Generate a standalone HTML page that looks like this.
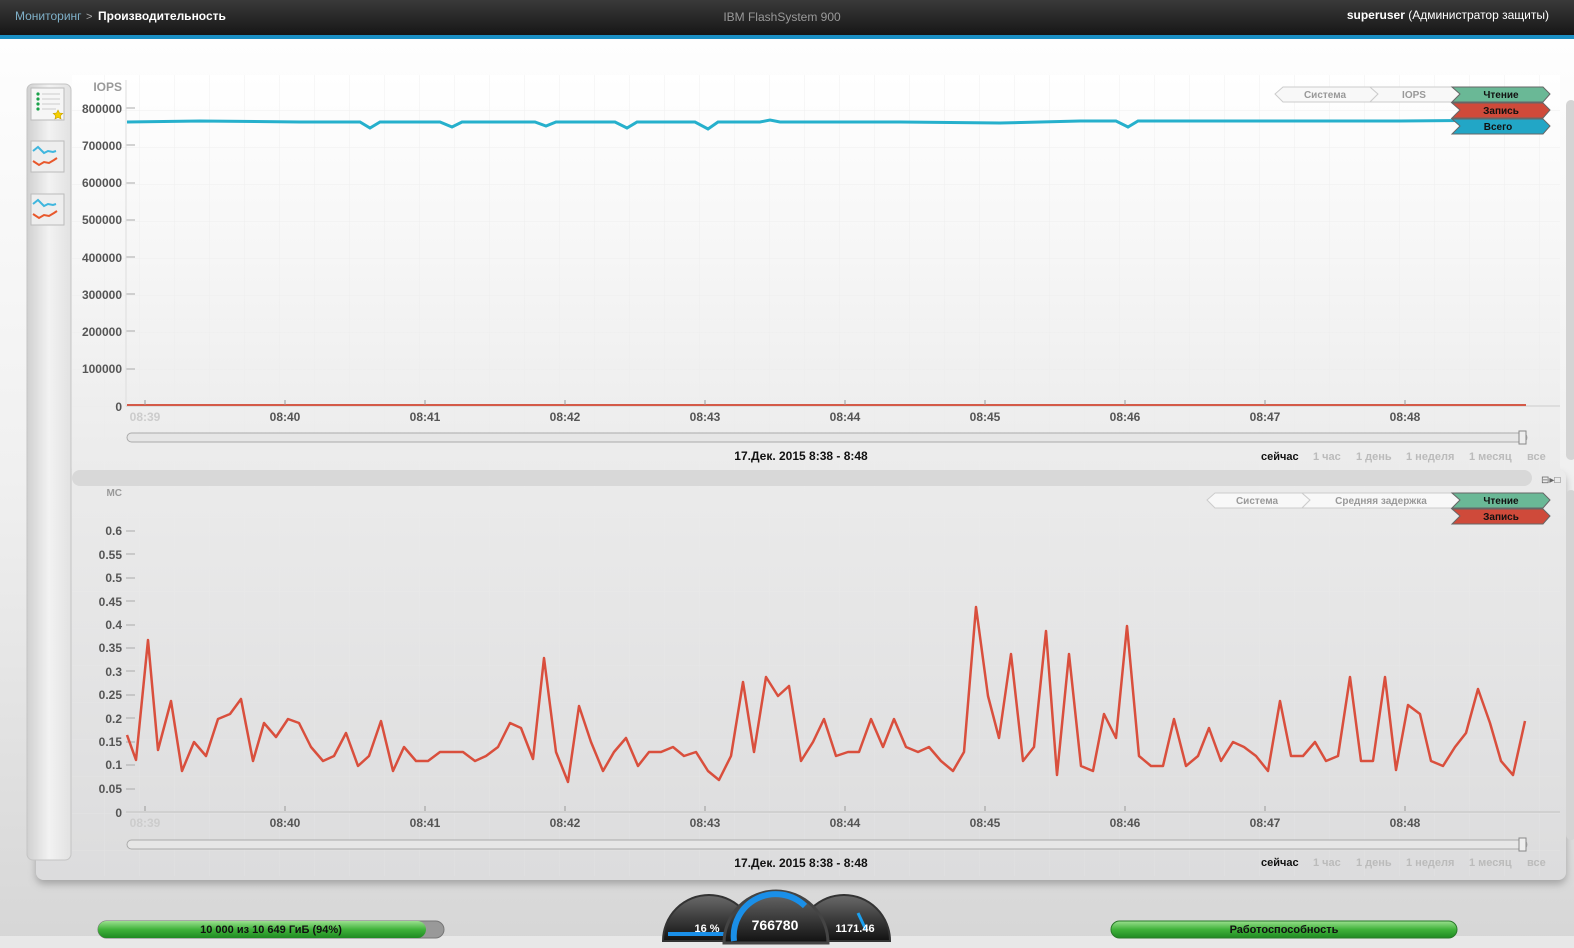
<!DOCTYPE html>
<html><head><meta charset="utf-8"><style>
body{margin:0;width:1574px;height:948px;overflow:hidden;font-family:"Liberation Sans",sans-serif;background:#e6e6e6}
svg{display:block}
text{font-family:"Liberation Sans",sans-serif}
</style></head><body>
<svg width="1574" height="948" viewBox="0 0 1574 948" xmlns="http://www.w3.org/2000/svg">
<defs>
<linearGradient id="hdr" x1="0" y1="0" x2="0" y2="1"><stop offset="0" stop-color="#3a3a3a"/><stop offset="1" stop-color="#161616"/></linearGradient>
<linearGradient id="pg" x1="0" y1="0" x2="0" y2="1"><stop offset="0" stop-color="#ffffff"/><stop offset="0.5" stop-color="#f0f0f0"/><stop offset="1" stop-color="#d6d6d6"/></linearGradient>
<linearGradient id="top" x1="0" y1="0" x2="0" y2="1"><stop offset="0" stop-color="#ffffff"/><stop offset="1" stop-color="#ebebeb"/></linearGradient>
<linearGradient id="low" x1="0" y1="0" x2="0" y2="1"><stop offset="0" stop-color="#ebebeb"/><stop offset="1" stop-color="#dcdcdd"/></linearGradient>
<linearGradient id="side" x1="0" y1="0" x2="1" y2="0"><stop offset="0" stop-color="#d0d0d0"/><stop offset="0.5" stop-color="#f2f2f2"/><stop offset="1" stop-color="#e2e2e2"/></linearGradient>
<linearGradient id="grn" x1="0" y1="0" x2="0" y2="1"><stop offset="0" stop-color="#9be08f"/><stop offset="0.5" stop-color="#3fb23a"/><stop offset="1" stop-color="#1f8a22"/></linearGradient>
<linearGradient id="gauge" x1="0" y1="0" x2="0" y2="1"><stop offset="0" stop-color="#6a6a6a"/><stop offset="1" stop-color="#111"/></linearGradient>
<pattern id="grid" width="35" height="37" patternUnits="userSpaceOnUse"><path d="M35 0V37M0 37H35" stroke="#ececec" stroke-width="1" fill="none"/></pattern>
<filter id="sh" x="-5%" y="-5%" width="110%" height="120%"><feDropShadow dx="0" dy="4" stdDeviation="4" flood-color="#000" flood-opacity="0.25"/></filter>
</defs>
<rect width="1574" height="948" fill="url(#pg)"/>
<rect width="1574" height="35" fill="url(#hdr)"/>
<rect y="35" width="1574" height="4" fill="#1a8fc4"/>
<text x="15" y="20" font-size="12" fill="#7fb0c8">Мониторинг</text>
<text x="86" y="20" font-size="11" fill="#aaa">&gt;</text>
<text x="98" y="20" font-size="12" font-weight="bold" fill="#fff">Производительность</text>
<text x="782" y="21" font-size="12" fill="#999" text-anchor="middle">IBM FlashSystem 900</text>
<text x="1549" y="19" font-size="12" fill="#fff" text-anchor="end"><tspan font-weight="bold">superuser</tspan>  (Администратор защиты)</text>

<rect x="36" y="470" width="1530" height="410" rx="8" fill="url(#low)" filter="url(#sh)"/>
<rect x="72" y="75" width="1488" height="395" fill="url(#top)"/>
<rect x="72" y="75" width="1488" height="395" fill="url(#grid)" opacity="0.8"/>
<rect x="72" y="470" width="1460" height="16" rx="8" fill="#d8d8d8"/>
<rect x="72" y="486" width="1488" height="390" fill="url(#grid)" opacity="0.35"/>

<rect x="27" y="84" width="44" height="776" rx="6" fill="url(#side)" stroke="#c4c4c4"/>
<rect x="31" y="88" width="33" height="32" fill="#f6f6f6" stroke="#bbb"/>
<g fill="#1aa24a"><circle cx="38" cy="94" r="1.6"/><circle cx="38" cy="99" r="1.6"/><circle cx="38" cy="104" r="1.6"/><circle cx="38" cy="109" r="1.6"/></g>
<g stroke="#ccc"><path d="M42 94H60M42 99H60M42 104H60M42 109H56"/></g>
<path d="M58 110l1.5 3 3.3.4-2.4 2.2.6 3.3-3-1.6-3 1.6.6-3.3-2.4-2.2 3.3-.4z" fill="#f5d000" stroke="#c9a000" stroke-width=".6"/>
<rect x="31" y="141" width="33" height="31" fill="#eee" stroke="#bbb"/>
<path d="M33 151l5-4 6 6 4-2 5 1 3-1" stroke="#3fb6de" stroke-width="2" fill="none"/>
<path d="M33 161l6 4 5-3 5 1 5-3 3-2" stroke="#e8582c" stroke-width="2" fill="none"/>
<rect x="31" y="194" width="33" height="31" fill="#eee" stroke="#bbb"/>
<path d="M33 204l5-4 6 6 4-2 5 1 3-1" stroke="#3fb6de" stroke-width="2" fill="none"/>
<path d="M33 214l6 4 5-3 5 1 5-3 3-2" stroke="#e8582c" stroke-width="2" fill="none"/>

<text x="122" y="91" font-size="12" font-weight="bold" fill="#999" text-anchor="end">IOPS</text>
<g font-size="12" font-weight="bold" fill="#555" text-anchor="end">
<text x="122" y="113">800000</text><text x="122" y="150">700000</text><text x="122" y="187">600000</text><text x="122" y="224">500000</text><text x="122" y="262">400000</text><text x="122" y="299">300000</text><text x="122" y="336">200000</text><text x="122" y="373">100000</text><text x="122" y="411">0</text>
</g>
<g stroke="#aaa"><path d="M126 108h9M126 145h9M126 183h9M126 220h9M126 257h9M126 294h9M126 331h9M126 369h9"/></g>
<path d="M126 80V406" stroke="#ddd"/>
<path d="M126 406H1560" stroke="#ddd" stroke-width="2"/>
<path d="M127 405H1526" stroke="#d45a48" stroke-width="2"/>
<g stroke="#999"><path d="M145 400v5M285 400v5M425 400v5M565 400v5M705 400v5M845 400v5M985 400v5M1125 400v5M1265 400v5M1405 400v5"/></g>
<g font-size="12" font-weight="bold" fill="#555" text-anchor="middle">
<text x="145" y="421" fill="#ccc">08:39</text><text x="285" y="421">08:40</text><text x="425" y="421">08:41</text><text x="565" y="421">08:42</text><text x="705" y="421">08:43</text><text x="845" y="421">08:44</text><text x="985" y="421">08:45</text><text x="1125" y="421">08:46</text><text x="1265" y="421">08:47</text><text x="1405" y="421">08:48</text>
</g>
<path d="M127 122L200 121 300 122 360 122 370 128 380 122 440 122 452 127 462 122 535 122 546 126 556 122 615 122 627 128 637 122 695 122 708 129 718 122 760 122 770 120 780 122 900 122 1000 123 1080 121 1116 121 1128 127 1138 121 1300 121 1400 121 1526 120" stroke="#26b0cc" stroke-width="3" fill="none"/>
<rect x="127" y="433" width="1400" height="9" rx="4.5" fill="#e6e6e6" stroke="#aaa"/>
<rect x="1519" y="431" width="7" height="13" fill="#eee" stroke="#888"/>
<text x="801" y="460" font-size="12" font-weight="bold" fill="#111" text-anchor="middle">17.Дек. 2015 8:38 - 8:48</text>
<g font-size="11" font-weight="bold" fill="#bbb"><text x="1261" y="460" fill="#111">сейчас</text><text x="1313" y="460">1 час</text><text x="1356" y="460">1 день</text><text x="1406" y="460">1 неделя</text><text x="1469" y="460">1 месяц</text><text x="1527" y="460">все</text></g>

<path d="M1283 87H1370L1378 94 1370 102H1283L1275 94Z" fill="#f8f8f8" stroke="#ccc"/>
<text x="1325" y="98" font-size="10" font-weight="bold" fill="#999" text-anchor="middle">Система</text>
<path d="M1370 87H1452L1460 94 1452 102H1370L1378 94Z" fill="#f8f8f8" stroke="#ccc"/>
<text x="1414" y="98" font-size="10" font-weight="bold" fill="#999" text-anchor="middle">IOPS</text>
<path d="M1452 87H1543L1550 94 1543 102H1452L1460 94Z" fill="#6ab896" stroke="#666"/>
<text x="1501" y="98" font-size="10" font-weight="bold" fill="#111" text-anchor="middle">Чтение</text>
<path d="M1452 103H1543L1550 110 1543 118H1452L1460 110Z" fill="#cf4a3a" stroke="#666"/>
<text x="1501" y="114" font-size="10" font-weight="bold" fill="#111" text-anchor="middle">Запись</text>
<path d="M1452 119H1543L1550 126 1543 134H1452L1460 126Z" fill="#22a6c6" stroke="#666"/>
<text x="1498" y="130" font-size="10" font-weight="bold" fill="#111" text-anchor="middle">Всего</text>
<text x="1541" y="483" font-size="10" fill="#666">⊟▸□</text>

<text x="122" y="496" font-size="10" font-weight="bold" fill="#999" text-anchor="end">МС</text>
<g font-size="12" font-weight="bold" fill="#555" text-anchor="end">
<text x="122" y="535">0.6</text><text x="122" y="559">0.55</text><text x="122" y="582">0.5</text><text x="122" y="606">0.45</text><text x="122" y="629">0.4</text><text x="122" y="652">0.35</text><text x="122" y="676">0.3</text><text x="122" y="699">0.25</text><text x="122" y="723">0.2</text><text x="122" y="746">0.15</text><text x="122" y="769">0.1</text><text x="122" y="793">0.05</text><text x="122" y="817">0</text>
</g>
<g stroke="#aaa"><path d="M126 531h9M126 554h9M126 578h9M126 601h9M126 625h9M126 648h9M126 671h9M126 695h9M126 718h9M126 742h9M126 765h9M126 789h9"/></g>
<path d="M126 812H1560" stroke="#d0d0d0" stroke-width="2"/>
<g stroke="#999"><path d="M145 806v5M285 806v5M425 806v5M565 806v5M705 806v5M845 806v5M985 806v5M1125 806v5M1265 806v5M1405 806v5"/></g>
<g font-size="12" font-weight="bold" fill="#555" text-anchor="middle">
<text x="145" y="827" fill="#ccc">08:39</text><text x="285" y="827">08:40</text><text x="425" y="827">08:41</text><text x="565" y="827">08:42</text><text x="705" y="827">08:43</text><text x="845" y="827">08:44</text><text x="985" y="827">08:45</text><text x="1125" y="827">08:46</text><text x="1265" y="827">08:47</text><text x="1405" y="827">08:48</text>
</g>
<path d="M127 735L136 760 148 640 158 750 171 701 182 771 194 742 206 756 218 719 230 714 241 699 253 761 264 723 276 737 288 719 299 723 311 747 323 761 334 756 346 733 358 766 369 756 381 721 393 771 404 747 416 761 428 761 440 752 451 752 463 752 475 761 486 756 498 747 510 723 521 728 533 759 544 658 556 752 568 782 579 706 591 742 603 771 614 752 626 738 638 766 649 752 661 752 673 747 684 756 696 752 708 771 719 780 731 756 743 682 754 752 766 677 778 696 789 686 801 761 813 742 824 719 836 756 848 752 859 752 871 719 883 747 894 719 906 747 918 752 929 747 941 761 953 771 964 752 976 607 988 696 999 738 1011 654 1023 761 1034 747 1046 631 1057 775 1069 654 1081 766 1093 771 1104 714 1116 738 1127 626 1139 756 1151 766 1163 766 1174 719 1186 766 1198 756 1209 728 1221 761 1233 742 1244 747 1256 756 1268 771 1280 701 1291 756 1303 756 1315 742 1326 761 1338 756 1350 677 1361 761 1373 761 1385 677 1396 770 1408 705 1420 714 1431 761 1443 766 1455 747 1466 733 1478 689 1490 723 1501 761 1513 775 1525 721" stroke="#d94f3d" stroke-width="2.5" fill="none" stroke-linejoin="round"/>
<rect x="127" y="840" width="1400" height="9" rx="4.5" fill="#e6e6e6" stroke="#aaa"/>
<rect x="1519" y="838" width="7" height="13" fill="#eee" stroke="#888"/>
<text x="801" y="867" font-size="12" font-weight="bold" fill="#111" text-anchor="middle">17.Дек. 2015 8:38 - 8:48</text>
<g font-size="11" font-weight="bold" fill="#bbb"><text x="1261" y="866" fill="#111">сейчас</text><text x="1313" y="866">1 час</text><text x="1356" y="866">1 день</text><text x="1406" y="866">1 неделя</text><text x="1469" y="866">1 месяц</text><text x="1527" y="866">все</text></g>

<path d="M1215 493H1302L1310 500 1302 508H1215L1207 500Z" fill="#f8f8f8" stroke="#ccc"/>
<text x="1257" y="504" font-size="10" font-weight="bold" fill="#999" text-anchor="middle">Система</text>
<path d="M1302 493H1452L1460 500 1452 508H1302L1310 500Z" fill="#f8f8f8" stroke="#ccc"/>
<text x="1381" y="504" font-size="10" font-weight="bold" fill="#999" text-anchor="middle">Средняя задержка</text>
<path d="M1452 493H1543L1550 500 1543 508H1452L1460 500Z" fill="#6ab896" stroke="#666"/>
<text x="1501" y="504" font-size="10" font-weight="bold" fill="#111" text-anchor="middle">Чтение</text>
<path d="M1452 509H1543L1550 516 1543 524H1452L1460 516Z" fill="#cf4a3a" stroke="#666"/>
<text x="1501" y="520" font-size="10" font-weight="bold" fill="#111" text-anchor="middle">Запись</text>
<rect x="1566" y="100" width="10" height="360" rx="5" fill="#d4d4d4"/>
<rect x="1566" y="490" width="10" height="350" rx="5" fill="#d4d4d4"/>

<rect y="936" width="1574" height="12" fill="#e8e8e8"/>
<rect x="98" y="921" width="346" height="17" rx="8.5" fill="#999" stroke="#777"/>
<rect x="98" y="921" width="328" height="17" rx="8.5" fill="url(#grn)"/>
<text x="271" y="933" font-size="11" font-weight="bold" fill="#111" text-anchor="middle">10 000 из 10 649 ГиБ (94%)</text>
<rect x="1111" y="921" width="346" height="17" rx="8.5" fill="url(#grn)" stroke="#2a7a2a"/>
<text x="1284" y="933" font-size="11" font-weight="bold" fill="#111" text-anchor="middle">Работоспособность</text>
<path d="M663 941A46 46 0 0 1 755 941Z" fill="url(#gauge)" stroke="#333" stroke-width="2"/>
<rect x="668" y="932" width="56" height="4" fill="#1a8fe8"/>
<text x="707" y="932" font-size="11" font-weight="bold" fill="#fff" text-anchor="middle">16 %</text>
<path d="M798 941A46 46 0 0 1 890 941Z" fill="url(#gauge)" stroke="#333" stroke-width="2"/>
<path d="M858 913L866 930" stroke="#1aa0f0" stroke-width="3"/>
<text x="855" y="932" font-size="11" font-weight="bold" fill="#fff" text-anchor="middle">1171.46</text>
<path d="M724 943A52 52 0 0 1 828 943Z" fill="url(#gauge)" stroke="#444" stroke-width="3"/>
<path d="M734 941A42 42 0 0 1 805 906" stroke="#1a8fe8" stroke-width="6" fill="none"/>
<text x="775" y="930" font-size="14" font-weight="bold" fill="#fff" text-anchor="middle">766780</text>
</svg>
</body></html>
